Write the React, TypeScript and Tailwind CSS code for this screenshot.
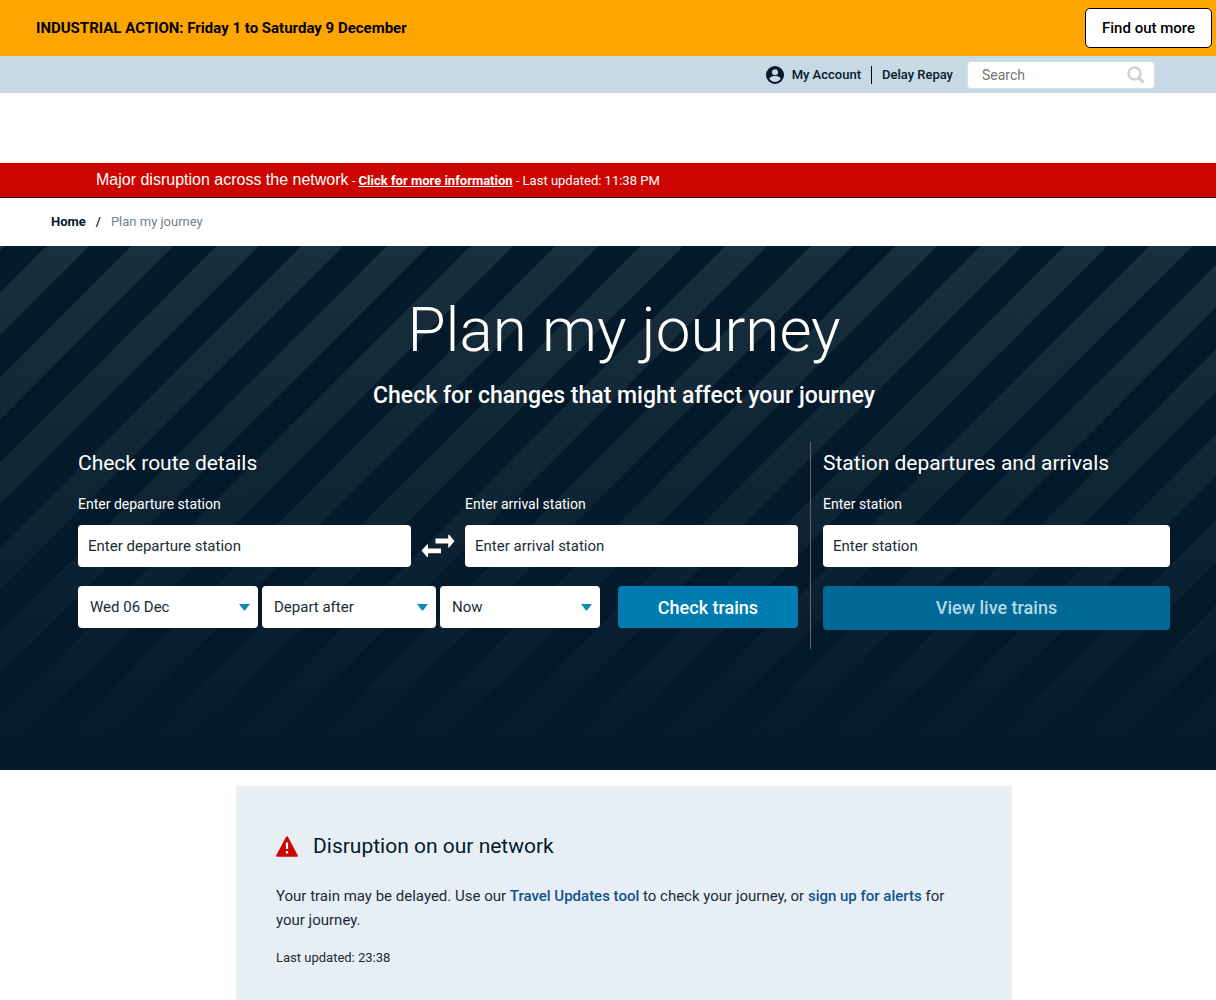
import React, { useState } from 'react';

const times = ['Now', '00:00', '06:00', '12:00', '18:00'];

const Caret: React.FC = () => (
  <svg
    width="11"
    height="7"
    viewBox="0 0 11 7"
    aria-hidden="true"
    className="pointer-events-none absolute right-2 top-[18px]"
  >
    <path d="M0 0h11L6.2 6.3a1 1 0 0 1-1.4 0z" fill="#0f8bb0" />
  </svg>
);

type SelectProps = {
  label: string;
  options: string[];
};

const Select: React.FC<SelectProps> = ({ label, options }) => (
  <div className="relative">
    <select
      aria-label={label}
      className="h-[42px] w-full appearance-none rounded-[4px] bg-white pl-3 pr-6 text-[15px] text-[#1b2b36]"
    >
      {options.map((o) => (
        <option key={o}>{o}</option>
      ))}
    </select>
    <Caret />
  </div>
);

type StationProps = {
  id: string;
  label: string;
  value: string;
  onChange: (value: string) => void;
};

const StationField: React.FC<StationProps> = ({ id, label, value, onChange }) => (
  <div className="min-w-0">
    <label htmlFor={id} className="block text-sm leading-5">
      {label}
    </label>
    <input
      id={id}
      type="text"
      placeholder={label}
      value={value}
      onChange={(e) => onChange(e.target.value)}
      className="mt-[11px] h-[42px] w-full rounded-[4px] bg-white px-2.5 text-[15px] text-[#1b2b36] placeholder:text-[#1b2b36]"
    />
  </div>
);

const TopBar: React.FC = () => (
  <nav className="flex h-[37px] items-center justify-end bg-[#c6d9e5] pr-[61px] text-[13px] font-medium text-[#04192a]">
    <a href="#account" className="flex items-center">
      <svg width="18" height="18" viewBox="0 0 18 18" aria-hidden="true">
        <circle cx="9" cy="9" r="9" fill="#04192a" />
        <circle cx="9" cy="6.2" r="3" fill="#c6d9e5" />
        <path d="M3.2 12.4C4.4 10.6 7 10 9 10s4.6.6 5.8 2.4C13.5 14.6 11.4 15.9 9 15.9s-4.5-1.3-5.8-3.5z" fill="#c6d9e5" />
      </svg>
      <span className="ml-2">My Account</span>
    </a>
    <span className="ml-2.5 h-[18px] w-px bg-black"></span>
    <a href="#delay-repay" className="ml-2.5">
      Delay Repay
    </a>
    <div className="relative ml-3.5">
      <input
        type="search"
        aria-label="Search"
        placeholder="Search"
        className="block h-7 w-[188px] rounded-[4px] border border-[#d5dde2] bg-white pl-3.5 pr-8 text-sm font-normal placeholder:text-[#757575]"
      />
      <svg width="18" height="18" viewBox="0 0 18 18" aria-hidden="true" className="pointer-events-none absolute right-2.5 top-[5px]">
        <circle cx="7.5" cy="7.5" r="6" fill="none" stroke="#cfcfcf" strokeWidth="2.4" />
        <path d="M12 12l4.5 4.5" stroke="#cfcfcf" strokeWidth="3" />
      </svg>
    </div>
  </nav>
);

const App: React.FC = () => {
  const [from, setFrom] = useState<string>('');
  const [to, setTo] = useState<string>('');
  const [station, setStation] = useState<string>('');

  const swap = () => {
    setFrom(to);
    setTo(from);
  };

  return (
    <div className="bg-white font-[Roboto,'Liberation_Sans',sans-serif] text-[#04192a]">
      <div className="flex h-14 items-center justify-between bg-[#ffa500] pl-9 pr-1 text-black">
        <p className="text-[15px] font-bold">INDUSTRIAL ACTION: Friday 1 to Saturday 9 December</p>
        <button className="h-10 rounded-[5px] border border-black bg-white px-4 text-[15px] font-medium">
          Find out more
        </button>
      </div>

      <TopBar />

      <div className="mt-[70px] flex h-[35px] items-center border-b border-[#2a0000] bg-[#cc0500] pl-24 text-[13px] text-white">
        <p>
          <span className="font-['Liberation_Sans',sans-serif] text-base">Major disruption across the network</span>
          {' - '}
          <a href="#info" className="font-bold underline">
            Click for more information
          </a>
          {' - Last updated: 11:38 PM'}
        </p>
      </div>

      <nav aria-label="Breadcrumb" className="flex h-12 items-center pl-[51px] text-[13px]">
        <a href="#home" className="font-bold">
          Home
        </a>
        <span className="mx-2.5 font-medium">/</span>
        <span className="text-[#75828a]">Plan my journey</span>
      </nav>

      <main>
        <section className="bg-[linear-gradient(to_bottom,transparent,#04192a),repeating-linear-gradient(135deg,#1a2f3d_0_3px,#04192a_3px_33px,#1a2f3d_33px_60px)] pb-[121px] pl-[66px] pr-[34px] pt-12 text-white">
          <h1 className="text-center text-[62px] font-light leading-[72px]">Plan my journey</h1>
          <p className="mt-3.5 text-center text-[23px] font-medium leading-8">
            Check for changes that might affect your journey
          </p>

          <div className="mt-[30px] grid grid-cols-3">
            <form className="col-span-2 px-3 pb-[21px] pt-[5px]" onSubmit={(e) => e.preventDefault()}>
              <h2 className="text-[21px] leading-8">Check route details</h2>
              <div className="mt-[15px] grid grid-cols-[1fr_54px_1fr] items-end">
                <StationField id="from" label="Enter departure station" value={from} onChange={setFrom} />
                <button
                  type="button"
                  onClick={swap}
                  aria-label="Swap stations"
                  className="flex h-[42px] items-center justify-center"
                >
                  <svg width="34" height="24" viewBox="0 0 34 24" fill="#fff" aria-hidden="true">
                    <path d="M14.5 4.6h12.7V.8h1L33.500 7l-5.300 6.400h-1V9.600H14.500z" />
                    <path d="M20 14.400H7v-4H6L.5 16.600 6 23h1v-3.800h13z" />
                  </svg>
                </button>
                <StationField id="to" label="Enter arrival station" value={to} onChange={setTo} />
              </div>
              <div className="mt-[19px] grid grid-cols-[30fr_29fr_29fr_30fr] gap-1">
                <Select label="Date" options={['Wed 06 Dec', 'Thu 07 Dec', 'Fri 08 Dec']} />
                <Select label="Journey type" options={['Depart after', 'Arrive before']} />
                <div className="pr-3.5">
                  <Select label="Time" options={times} />
                </div>
                <button className="h-[42px] rounded-[4px] bg-[#007db0] pt-0.5 text-lg font-medium">Check trains</button>
              </div>
            </form>

            <form className="border-l border-[#5b6a75] px-3 pt-[5px]" onSubmit={(e) => e.preventDefault()}>
              <h2 className="text-[21px] leading-8">Station departures and arrivals</h2>
              <div className="mt-[15px]">
                <StationField id="station" label="Enter station" value={station} onChange={setStation} />
              </div>
              <button className="mt-[19px] h-11 w-full rounded-[4px] bg-[#006995] text-lg font-medium text-[#b5d9e8]">
                View live trains
              </button>
            </form>
          </div>
        </section>

        <div className="pl-8">
          <section className="mx-auto mt-4 max-w-[776px] bg-[#e7eff5] px-10 pb-10 pt-11 text-[#1b2b36]">
            <h2 className="flex items-center text-[21px] leading-8 text-[#04192a]">
              <svg width="22" height="21" viewBox="0 0 22 21" aria-hidden="true" className="mr-[15px]">
                <path d="M11 1.2L20.8 19.8H1.2z" fill="#cc0500" stroke="#cc0500" strokeWidth="2" strokeLinejoin="round" />
                <path d="M11 6.5v6.5M11 15v2.5" stroke="#fff" strokeWidth="2.2" />
              </svg>
              Disruption on our network
            </h2>
            <p className="mt-[22px] text-[15px] leading-6">
              Your train may be delayed. Use our{' '}
              <a href="#updates" className="font-medium text-[#0f528f]">
                Travel Updates tool
              </a>{' '}
              to check your journey, or{' '}
              <a href="#alerts" className="font-medium text-[#0f528f]">
                sign up for alerts
              </a>{' '}
              for your journey.
            </p>
            <p className="mt-3.5 text-[13px] leading-6">Last updated: 23:38</p>
          </section>
        </div>
      </main>
    </div>
  );
};

export default App;
